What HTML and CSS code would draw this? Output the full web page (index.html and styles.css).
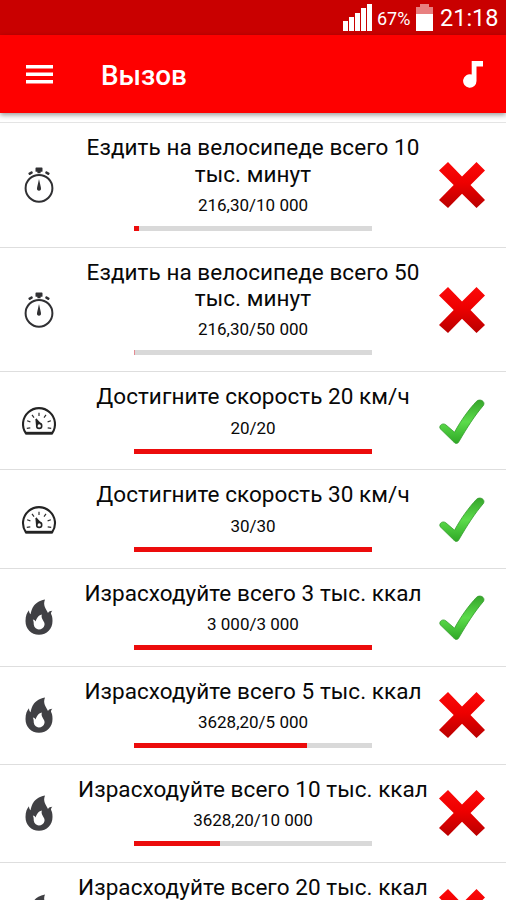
FILE: index.html
```html
<!DOCTYPE html>
<html lang="ru">
<head>
<meta charset="utf-8">
<title>Вызов</title>
<link rel="stylesheet" href="styles.css">
</head>
<body>
<svg class="defs" aria-hidden="true">
  <defs>
    <linearGradient id="red" gradientUnits="userSpaceOnUse" x1="0" y1="0" x2="0" y2="46"><stop offset="0" stop-color="#fb0909"/><stop offset=".45" stop-color="#ee0000"/><stop offset="1" stop-color="#b90000"/></linearGradient>
    <linearGradient id="green" x1="0" y1="0" x2="0" y2="1"><stop offset="0" stop-color="#36a52b"/><stop offset=".5" stop-color="#5cdc4b"/><stop offset="1" stop-color="#2fa826"/></linearGradient>
    <symbol id="timer" viewBox="0 0 36 42">
      <circle cx="18" cy="24.3" r="13.4" fill="none" stroke="#303033" stroke-width="2"/>
      <path fill="#303033" d="M15.2 3.5h5.6q.7 0 .7.7v3q0 .5-.7.5h-1.2v1.6h-3.2V7.700h-1.200q-.7 0-.7-.5v-3q0-.7.7-.7zM7.700 8.800l2.700-1.500q.6-.2.900.3l.5.9q.2.600-.300.900l-2.500 1.600q-.6.300-1-.3l-.6-1q-.2-.600.300-.9zM28.300 8.800l-2.700-1.500q-.6-.2-.9.300l-.5.9q-.2.600.3.900l2.500 1.600q.6.300 1-.3l.6-1q.2-.6-.3-.9zM18 15l1.900 8.500c.5 2.300-.5 3.300-1.900 3.300s-2.400-1-1.900-3.300z"/>
    </symbol>
    <symbol id="gauge" viewBox="0 0 36 42">
      <path d="M4.900 32.300A16 16 0 1 1 31.100 32.300z" transform="translate(0 -1)" fill="none" stroke="#242424" stroke-width="2.100" stroke-linejoin="round"/>
      <path d="M4.500 31.200h27" stroke="#242424" stroke-width="2.800"/>
      <path d="M5.800 26.300l3.500-.5M6.100 18.800l3.300 1.100M11 12.900l2 2.800M18 10.700v3.300M25 12.900l-2 2.800M29.900 18.800l-3.300 1.100M30.200 26.300l-3.500-.5" stroke="#303030" stroke-width="1.200"/>
      <path d="M15 16l5.100 5.500-4.100 2z" fill="#242424"/><circle cx="18.200" cy="23.900" r="2.500" fill="#fff" stroke="#242424" stroke-width="1.600"/><path d="M15.100 17l.7 7" stroke="#242424" stroke-width="1.500"/>
    </symbol>
    <symbol id="flame" viewBox="0 0 36 42">
      <path fill="#404044" fill-rule="evenodd" d="M24 3.400C11 6 10.500 15 9.600 18.200 8.500 17.500 8 16 8 14.300 5.900 16.500 4.500 20 4.500 25c0 8 5.500 13.700 13.500 13.700S31.500 33 31.500 25c0-3-.5-5.500-1.500-7.200 0-1.500.6-2.500 1.400-3.100-2.200.1-3.600.8-4.400 2.300C25.200 12.700 21.500 9.500 24 3.400zM20.800 18.400c-1.300 5 3.600 7 2.700 10.500-.6 2.900-3 4.500-5.600 4.500-3.200 0-5.300-2.800-5.200-6.100.1-1.600-.4-2.800-.9-3.800 1.300.2 2.200.8 2.800 1.900C15.700 22.300 17 19.300 20.800 18.400z"/>
    </symbol>
    <symbol id="cross" viewBox="0 0 46 46">
      <path fill="url(#red)" d="M9 0L23 14.500 37.500 0 46 8.500 31.500 23 46 38 37.500 46 23 31.700 9 46 0 38 14.700 23 0 8.500z"/>
    </symbol>
    <symbol id="check" viewBox="0 0 46 46">
      <path fill="url(#green)" stroke="#369c2f" stroke-width=".8" stroke-linejoin="round" d="M1 29.500C-.2 26 4 23.600 6.800 25.800L15.500 33.200C22.500 20.500 29.500 11 37.300 2.500 40.500-.8 46.500 2 44.600 6.200 35 17.500 28.500 28 20 42.500 18.800 45 16.500 45 15 43.200z"/>
    </symbol>
  </defs>
</svg>
<div class="status">
  <svg class="signal" viewBox="0 0 29 27"><path fill="#fff" d="M0 17h5v10H0zM6 13h5v14H6zM12 9h5v18h-5zM18 4h5v23h-5zM24 0h5v27h-5z"/></svg>
  <span class="percent">67%</span>
  <svg class="battery" viewBox="0 0 17 27"><path fill="#e88080" d="M0 10V3h4V0h9v3h4v7z"/><path fill="#fff" d="M0 10h17v17H0z"/></svg>
  <span class="clock">21:18</span>
</div>
<header class="appbar">
  <svg class="menu" viewBox="0 0 27 19"><path fill="#fff" d="M0 0h27v3.500H0zM0 7.500h27V11H0zM0 15h27v3.500H0z"/></svg>
  <h1>Вызов</h1>
  <svg class="note" viewBox="0 0 20 27"><path fill="#fff" d="M8.700 0H20v5.500h-6.500V20a6.700 6.700 0 1 1-4.800-6.400z"/></svg>
</header>
<main class="list">
  <section class="row"><svg class="kind timer"><use href="#timer"/></svg><div class="body"><h2>Ездить на велосипеде всего 10 тыс. минут</h2><p>216,30/10 000</p><div class="bar"><div class="fill" style="width:2.2%"></div></div></div><svg class="mark"><use href="#cross"/></svg></section>
  <section class="row"><svg class="kind timer"><use href="#timer"/></svg><div class="body"><h2>Ездить на велосипеде всего 50 тыс. минут</h2><p>216,30/50 000</p><div class="bar"><div class="fill faint" style="width:.43%"></div></div></div><svg class="mark"><use href="#cross"/></svg></section>
  <section class="row"><svg class="kind gauge"><use href="#gauge"/></svg><div class="body"><h2>Достигните скорость 20 км/ч</h2><p>20/20</p><div class="bar"><div class="fill" style="width:100%"></div></div></div><svg class="mark done"><use href="#check"/></svg></section>
  <section class="row"><svg class="kind gauge"><use href="#gauge"/></svg><div class="body"><h2>Достигните скорость 30 км/ч</h2><p>30/30</p><div class="bar"><div class="fill" style="width:100%"></div></div></div><svg class="mark done"><use href="#check"/></svg></section>
  <section class="row"><svg class="kind"><use href="#flame"/></svg><div class="body"><h2>Израсходуйте всего 3 тыс. ккал</h2><p>3 000/3 000</p><div class="bar"><div class="fill" style="width:100%"></div></div></div><svg class="mark done"><use href="#check"/></svg></section>
  <section class="row"><svg class="kind"><use href="#flame"/></svg><div class="body"><h2>Израсходуйте всего 5 тыс. ккал</h2><p>3628,20/5 000</p><div class="bar"><div class="fill" style="width:72.56%"></div></div></div><svg class="mark"><use href="#cross"/></svg></section>
  <section class="row"><svg class="kind"><use href="#flame"/></svg><div class="body"><h2>Израсходуйте всего 10 тыс. ккал</h2><p>3628,20/10 000</p><div class="bar"><div class="fill" style="width:36.28%"></div></div></div><svg class="mark"><use href="#cross"/></svg></section>
  <section class="row"><svg class="kind"><use href="#flame"/></svg><div class="body tall"><h2>Израсходуйте всего 20 тыс. ккал</h2></div><svg class="mark"><use href="#cross"/></svg></section>
</main>
</body>
</html>
```
FILE: styles.css
```css
* { box-sizing: border-box; margin: 0; }
body {
  height: 900px;
  overflow: hidden;
  display: flex;
  flex-direction: column;
  background: #fff;
  color: #080808;
  font-family: Roboto, sans-serif;
}
.defs { position: absolute; width: 0; height: 0; }
.status {
  flex: none;
  display: flex;
  justify-content: flex-end;
  align-items: flex-start;
  height: 35px;
  padding: 4px 10px 0 0;
  background: #c90000;
  color: #fff;
}
.signal { width: 29px; height: 27px; }
.percent { width: 34px; margin: 4px 5px 0; font-size: 18px; line-height: 21px; white-space: nowrap; }
.battery { width: 17px; height: 27px; }
.clock { width: 56px; margin-left: 7px; font-size: 23.5px; line-height: 28px; white-space: nowrap; }
.appbar {
  flex: none;
  display: flex;
  align-items: center;
  height: 78px;
  padding: 0 23px 0 26px;
  background: #fe0000;
  color: #fff;
  box-shadow: 0 2px 5px rgba(0, 0, 0, .4);
  z-index: 1;
}
.menu { width: 27px; height: 19px; }
.appbar h1 { flex: 1; margin: 3px 0 0 48px; font-size: 27.9px; font-weight: 500; line-height: 32px; }
.note { width: 20px; height: 27px; }
.list { flex: 1; min-height: 0; overflow: hidden; margin-top: 9.4px; border-top: 1.5px solid #e4e4e4; }
.row {
  display: grid;
  grid-template-columns: 36px 382px 46px;
  justify-content: start;
  align-items: center;
  padding: 11px 0 15.85px 21px;
  border-bottom: 1px solid #dedede;
}
.kind { width: 36px; height: 42px; margin-top: 5px; }
.kind.timer { margin-top: 5px; }
.kind.gauge { margin-top: 10px; }
.body { width: 362px; justify-self: center; margin-left: 10px; text-align: center; }
.body.tall { min-height: 70.3px; }
.body h2 { font-size: 22.5px; font-weight: 400; line-height: 26.3px; letter-spacing: .06px; }
.body p { margin-top: 8px; font-size: 17px; line-height: 20px; }
.bar { width: 238.5px; height: 5px; margin: 11px auto 0; background: #d9d9d9; }
.fill { height: 100%; background: #ec0c0c; }
.fill.faint { background: #e58a92; }
.mark { width: 46px; height: 46px; margin-top: 5px; }
.mark.done { margin-top: 7px; }
```
